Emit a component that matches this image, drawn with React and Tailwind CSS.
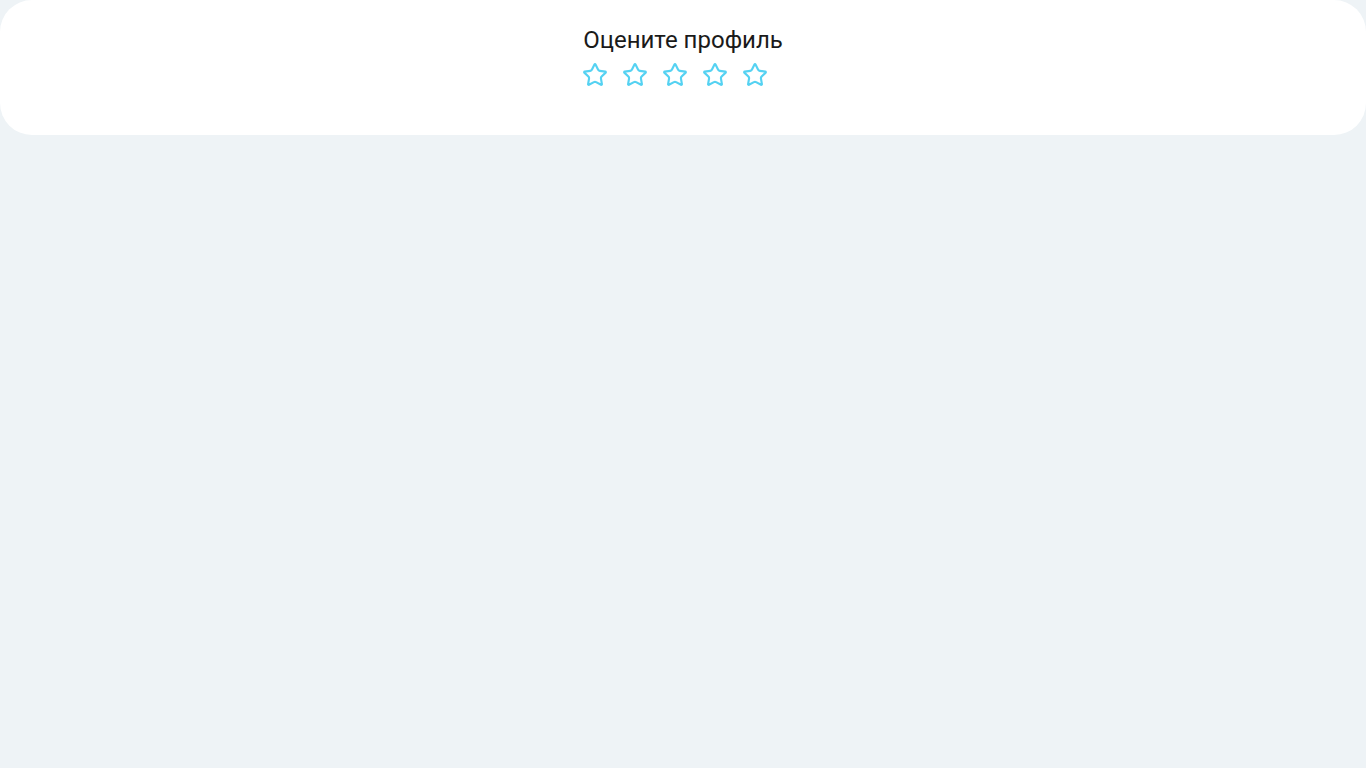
import React from "react";
import { Star } from "lucide-react";

const App = () => {
  return (
    <div className="min-h-screen w-full bg-[#eef3f6]" style={{ fontFamily: "Roboto, 'Liberation Sans', sans-serif" }}>
      <div className="h-[135px] w-full rounded-[32px] bg-white flex flex-col items-center pt-[25px]">
        <h2 className="text-[24px] leading-[30px] font-normal text-[#1a1a1a]">Оцените профиль</h2>
        {/* звезды рейтинга */}
        <div className="mt-[7px] -ml-[2px] flex items-center">
          {[1, 2, 3, 4, 5].map((n) => (
            <button key={n} className="mr-[14px] flex h-[26px] w-[26px] cursor-pointer items-center justify-center text-[#55d2f2]">
              <Star size={26} strokeWidth={2} />
            </button>
          ))}
        </div>
      </div>
    </div>
  );
};

export default App;
